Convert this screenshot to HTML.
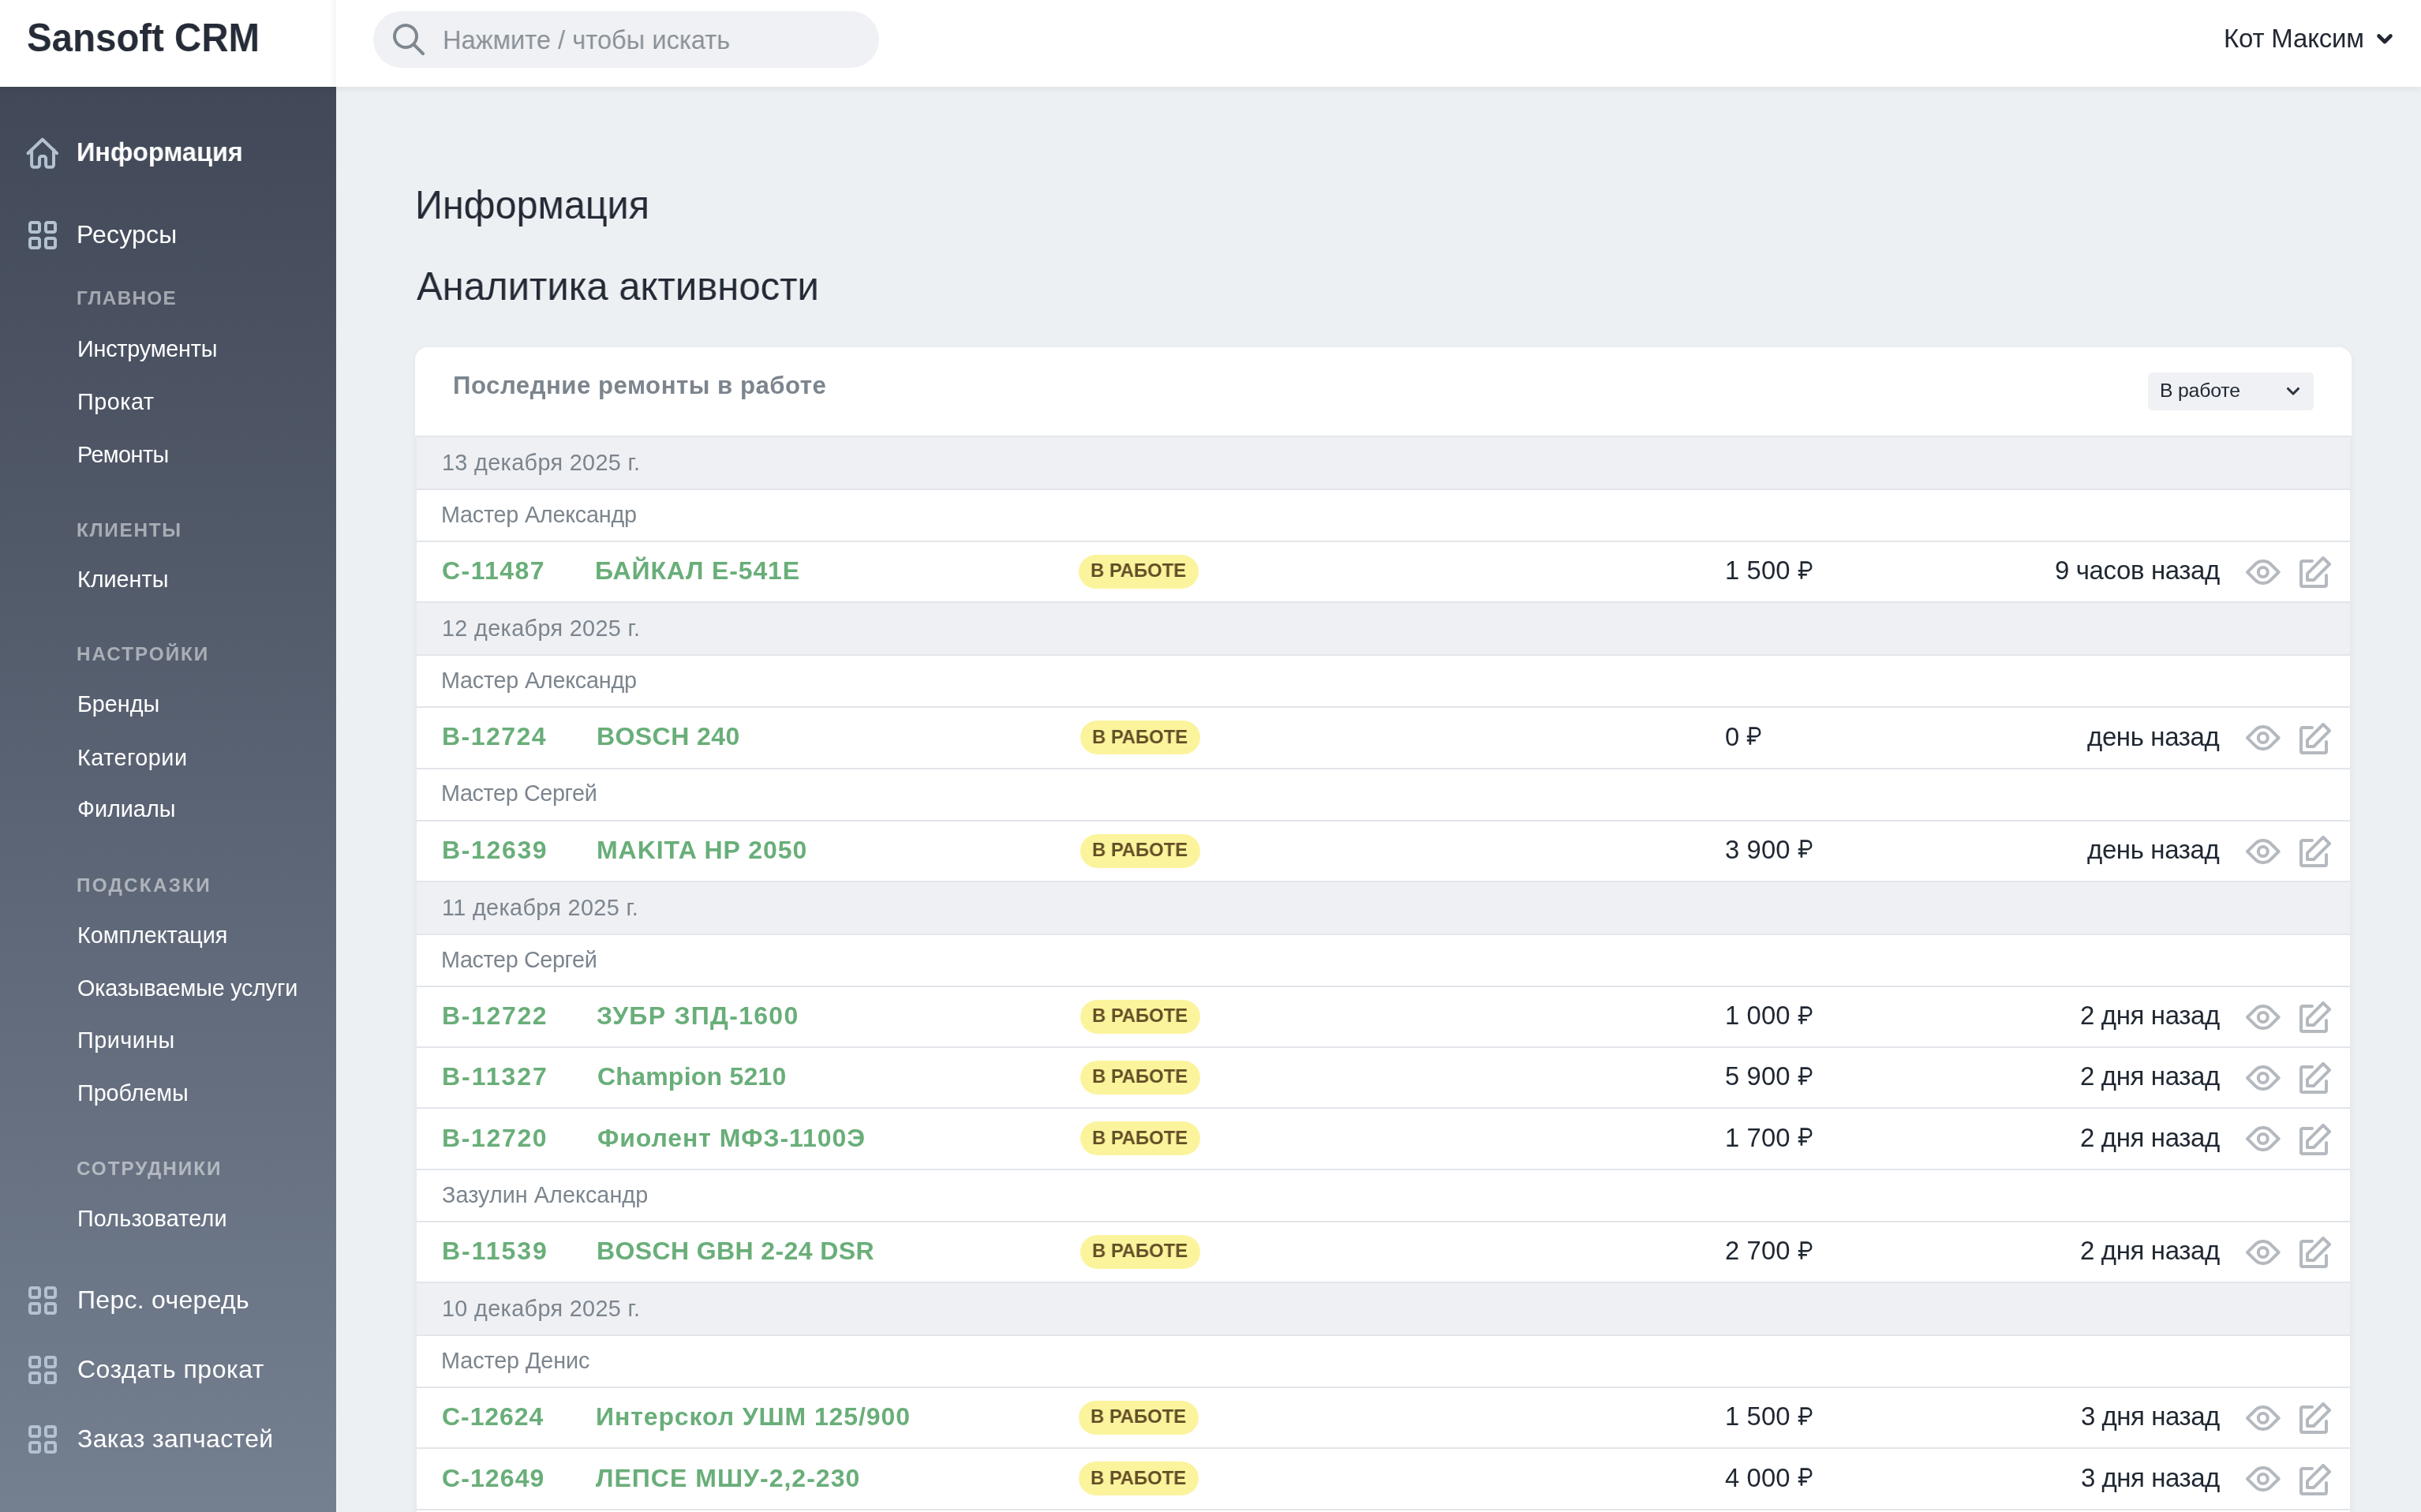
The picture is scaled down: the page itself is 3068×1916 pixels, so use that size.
<!DOCTYPE html>
<html lang="ru">
<head>
<meta charset="utf-8">
<title>Sansoft CRM</title>
<style>
html,body{margin:0;padding:0;}
body{width:3068px;height:1916px;overflow:hidden;position:relative;background:#edf0f3;font-family:"Liberation Sans",sans-serif;}
.t{position:absolute;white-space:nowrap;line-height:1;z-index:6;will-change:transform;}
#hdr{position:absolute;left:0;top:0;width:3068px;height:110px;background:#fff;box-shadow:0 4px 8px rgba(0,0,0,.05);z-index:5;}
#side{position:absolute;left:0;top:110px;width:426px;height:1806px;background:linear-gradient(180deg,#414857 0%,#747f90 100%);z-index:4;}
#card{position:absolute;left:526px;top:440px;width:2454px;height:1600px;background:#fff;border-radius:16px 16px 0 0;box-shadow:0 2px 8px rgba(0,0,0,.05);}
.row{position:absolute;left:528px;width:2450px;background:#fff;}
.row.d{background:#eff0f4;}
.ln{position:absolute;left:528px;width:2450px;height:2px;background:#e2e5ea;}
.vb{position:absolute;top:552px;width:2px;height:1364px;background:#e6e9ee;}
.badge{position:absolute;height:43px;width:152px;border-radius:22px;background:#fcf49d;}
svg{z-index:6}
</style>
</head>
<body>
<div id="hdr"></div>
<div style="position:absolute;left:416px;top:0;width:10px;height:110px;background:linear-gradient(90deg,rgba(0,0,0,0),rgba(0,0,0,.035));z-index:5"></div>
<div id="side"></div>

<div class="t" style="left:34.3px;top:22.53px;font-size:50.4px;font-weight:bold;color:#252c37;letter-spacing:0px;transform:scaleX(0.941);transform-origin:0 0;">Sansoft CRM</div>
<div style="position:absolute;left:473px;top:14px;width:641px;height:72px;border-radius:36px;background:#eff1f4;z-index:6"></div>
<svg style="position:absolute;left:497.5px;top:30px;z-index:6" width="40" height="40" viewBox="0 0 20 20"><path fill="#7f878f" d="M14.32 12.906l5.387 5.387a1 1 0 0 1-1.414 1.414l-5.387-5.387a8 8 0 1 1 1.414-1.414zM8 14A6 6 0 1 0 8 2a6 6 0 0 0 0 12z"/></svg>
<div class="t" style="left:560.7px;top:33.01px;font-size:34px;font-weight:normal;color:#8a9097;letter-spacing:0px;transform:scaleX(0.9605);transform-origin:0 0;">Нажмите / чтобы искать</div>
<div class="t" style="left:2818.0px;top:32.06px;font-size:33px;font-weight:normal;color:#212833;letter-spacing:-0.2px;">Кот Максим</div>
<svg style="position:absolute;left:3009px;top:40px;z-index:6" width="26" height="20" viewBox="0 0 26 20" fill="none" stroke="#212833" stroke-width="4.6" stroke-linecap="round" stroke-linejoin="round"><path d="M5.5 5.5l7.5 7.5 7.5-7.5"/></svg>
<svg style="position:absolute;left:24px;top:164px;z-index:6" width="60" height="60" viewBox="0 0 60 60" fill="none" stroke="#b3c1d1" stroke-width="4" stroke-linecap="round" stroke-linejoin="round"><path d="M11.5 30.2L29.8 12.7 48.1 30.2"/><path d="M16.1 25.8V45.1a2.7 2.7 0 0 0 2.7 2.7H23.3a2.7 2.7 0 0 0 2.7-2.7V36.8a2.7 2.7 0 0 1 2.7-2.7H31.4a2.7 2.7 0 0 1 2.7 2.7V45.1a2.7 2.7 0 0 0 2.7 2.7H41.3a2.7 2.7 0 0 0 2.7-2.7V25.8"/></svg>
<div class="t" style="left:97.4px;top:175.94px;font-size:33.5px;font-weight:bold;color:#ffffff;letter-spacing:0px;transform:scaleX(0.97);transform-origin:0 0;">Информация</div>
<svg style="position:absolute;left:34px;top:278px" width="40" height="40" viewBox="0 0 20 20"><path fill="#b3c1d1" d="M3 1h4c1.1 0 2 .9 2 2v4c0 1.1-.9 2-2 2H3c-1.1 0-2-.9-2-2V3c0-1.1.9-2 2-2zm0 2v4h4V3H3zm10-2h4c1.1 0 2 .9 2 2v4c0 1.1-.9 2-2 2h-4c-1.1 0-2-.9-2-2V3c0-1.1.9-2 2-2zm0 2v4h4V3h-4zM3 11h4c1.1 0 2 .9 2 2v4c0 1.1-.9 2-2 2H3c-1.1 0-2-.9-2-2v-4c0-1.1.9-2 2-2zm0 2v4h4v-4H3zm10-2h4c1.1 0 2 .9 2 2v4c0 1.1-.9 2-2 2h-4c-1.1 0-2-.9-2-2v-4c0-1.1.9-2 2-2zm0 2v4h4v-4h-4z"/></svg>
<div class="t" style="left:97.0px;top:280.71px;font-size:32px;font-weight:normal;color:#ffffff;letter-spacing:0.17px;">Ресурсы</div>
<div class="t" style="left:97.2px;top:366.43px;font-size:24.3px;font-weight:bold;color:rgba(255,255,255,0.5);letter-spacing:1.3px;">ГЛАВНОЕ</div>
<div class="t" style="left:97.5px;top:427.62px;font-size:28.8px;font-weight:normal;color:#ffffff;letter-spacing:-0.22px;">Инструменты</div>
<div class="t" style="left:97.5px;top:494.82px;font-size:28.8px;font-weight:normal;color:#ffffff;letter-spacing:0.5px;">Прокат</div>
<div class="t" style="left:97.5px;top:561.82px;font-size:28.8px;font-weight:normal;color:#ffffff;letter-spacing:-0.55px;">Ремонты</div>
<div class="t" style="left:97.2px;top:659.73px;font-size:24.3px;font-weight:bold;color:rgba(255,255,255,0.5);letter-spacing:1.72px;">КЛИЕНТЫ</div>
<div class="t" style="left:97.5px;top:719.82px;font-size:28.8px;font-weight:normal;color:#ffffff;letter-spacing:-0.02px;">Клиенты</div>
<div class="t" style="left:97.2px;top:817.23px;font-size:24.3px;font-weight:bold;color:rgba(255,255,255,0.5);letter-spacing:1.94px;">НАСТРОЙКИ</div>
<div class="t" style="left:97.5px;top:878.12px;font-size:28.8px;font-weight:normal;color:#ffffff;letter-spacing:-0.04px;">Бренды</div>
<div class="t" style="left:97.5px;top:945.62px;font-size:28.8px;font-weight:normal;color:#ffffff;letter-spacing:0.49px;">Категории</div>
<div class="t" style="left:97.5px;top:1011.42px;font-size:28.8px;font-weight:normal;color:#ffffff;letter-spacing:0.0px;">Филиалы</div>
<div class="t" style="left:97.2px;top:1110.43px;font-size:24.3px;font-weight:bold;color:rgba(255,255,255,0.5);letter-spacing:2.23px;">ПОДСКАЗКИ</div>
<div class="t" style="left:97.5px;top:1170.82px;font-size:28.8px;font-weight:normal;color:#ffffff;letter-spacing:-0.05px;">Комплектация</div>
<div class="t" style="left:97.5px;top:1237.52px;font-size:28.8px;font-weight:normal;color:#ffffff;letter-spacing:-0.21px;">Оказываемые услуги</div>
<div class="t" style="left:97.5px;top:1304.42px;font-size:28.8px;font-weight:normal;color:#ffffff;letter-spacing:0.47px;">Причины</div>
<div class="t" style="left:97.5px;top:1371.32px;font-size:28.8px;font-weight:normal;color:#ffffff;letter-spacing:-0.07px;">Проблемы</div>
<div class="t" style="left:97.2px;top:1468.83px;font-size:24.3px;font-weight:bold;color:rgba(255,255,255,0.5);letter-spacing:1.93px;">СОТРУДНИКИ</div>
<div class="t" style="left:97.5px;top:1530.42px;font-size:28.8px;font-weight:normal;color:#ffffff;letter-spacing:0.14px;">Пользователи</div>
<svg style="position:absolute;left:34px;top:1628px" width="40" height="40" viewBox="0 0 20 20"><path fill="#b3c1d1" d="M3 1h4c1.1 0 2 .9 2 2v4c0 1.1-.9 2-2 2H3c-1.1 0-2-.9-2-2V3c0-1.1.9-2 2-2zm0 2v4h4V3H3zm10-2h4c1.1 0 2 .9 2 2v4c0 1.1-.9 2-2 2h-4c-1.1 0-2-.9-2-2V3c0-1.1.9-2 2-2zm0 2v4h4V3h-4zM3 11h4c1.1 0 2 .9 2 2v4c0 1.1-.9 2-2 2H3c-1.1 0-2-.9-2-2v-4c0-1.1.9-2 2-2zm0 2v4h4v-4H3zm10-2h4c1.1 0 2 .9 2 2v4c0 1.1-.9 2-2 2h-4c-1.1 0-2-.9-2-2v-4c0-1.1.9-2 2-2zm0 2v4h4v-4h-4z"/></svg>
<div class="t" style="left:97.5px;top:1631.21px;font-size:32px;font-weight:normal;color:#ffffff;letter-spacing:0.29px;">Перс. очередь</div>
<svg style="position:absolute;left:34px;top:1716px" width="40" height="40" viewBox="0 0 20 20"><path fill="#b3c1d1" d="M3 1h4c1.1 0 2 .9 2 2v4c0 1.1-.9 2-2 2H3c-1.1 0-2-.9-2-2V3c0-1.1.9-2 2-2zm0 2v4h4V3H3zm10-2h4c1.1 0 2 .9 2 2v4c0 1.1-.9 2-2 2h-4c-1.1 0-2-.9-2-2V3c0-1.1.9-2 2-2zm0 2v4h4V3h-4zM3 11h4c1.1 0 2 .9 2 2v4c0 1.1-.9 2-2 2H3c-1.1 0-2-.9-2-2v-4c0-1.1.9-2 2-2zm0 2v4h4v-4H3zm10-2h4c1.1 0 2 .9 2 2v4c0 1.1-.9 2-2 2h-4c-1.1 0-2-.9-2-2v-4c0-1.1.9-2 2-2zm0 2v4h4v-4h-4z"/></svg>
<div class="t" style="left:97.5px;top:1718.61px;font-size:32px;font-weight:normal;color:#ffffff;letter-spacing:0.5px;">Создать прокат</div>
<svg style="position:absolute;left:34px;top:1804px" width="40" height="40" viewBox="0 0 20 20"><path fill="#b3c1d1" d="M3 1h4c1.1 0 2 .9 2 2v4c0 1.1-.9 2-2 2H3c-1.1 0-2-.9-2-2V3c0-1.1.9-2 2-2zm0 2v4h4V3H3zm10-2h4c1.1 0 2 .9 2 2v4c0 1.1-.9 2-2 2h-4c-1.1 0-2-.9-2-2V3c0-1.1.9-2 2-2zm0 2v4h4V3h-4zM3 11h4c1.1 0 2 .9 2 2v4c0 1.1-.9 2-2 2H3c-1.1 0-2-.9-2-2v-4c0-1.1.9-2 2-2zm0 2v4h4v-4H3zm10-2h4c1.1 0 2 .9 2 2v4c0 1.1-.9 2-2 2h-4c-1.1 0-2-.9-2-2v-4c0-1.1.9-2 2-2zm0 2v4h4v-4h-4z"/></svg>
<div class="t" style="left:97.5px;top:1806.61px;font-size:32px;font-weight:normal;color:#ffffff;letter-spacing:0.37px;">Заказ запчастей</div>
<div class="t" style="left:526.1px;top:234.86px;font-size:50px;font-weight:normal;color:#232a35;letter-spacing:0px;transform:scaleX(0.97);transform-origin:0 0;">Информация</div>
<div class="t" style="left:528.0px;top:337.87px;font-size:50px;font-weight:normal;color:#232a35;letter-spacing:0px;transform:scaleX(0.98);transform-origin:0 0;">Аналитика активности</div>
<div id="card"></div>
<div class="vb" style="left:526px"></div><div class="vb" style="left:2978px"></div>
<div class="t" style="left:574.1px;top:473.28px;font-size:31.2px;font-weight:bold;color:#7c858e;letter-spacing:0.5px;">Последние ремонты в работе</div>
<div style="position:absolute;left:2722px;top:472px;width:210px;height:48px;border-radius:5px;background:#eff1f4;z-index:6"></div>
<div class="t" style="left:2737.2px;top:483.00px;font-size:24.8px;font-weight:normal;color:#212833;letter-spacing:-0.2px;">В работе</div>
<svg style="position:absolute;left:2894px;top:486px;z-index:6" width="24" height="20" viewBox="0 0 24 20" fill="none" stroke="#2f3640" stroke-width="3.1" stroke-linecap="round" stroke-linejoin="round"><path d="M5.5 6.5l6.5 6.5 6.5-6.5"/></svg>
<div class="ln" style="top:552px"></div>
<div class="row d" style="top:554px;height:65px"></div>
<div class="t" style="left:560.0px;top:571.62px;font-size:28.8px;font-weight:normal;color:#7c858e;letter-spacing:0.35px;">13 декабря 2025 г.</div>
<div class="ln" style="top:619px"></div>
<div class="row" style="top:621px;height:64px"></div>
<div class="t" style="left:559.2px;top:637.82px;font-size:28.8px;font-weight:normal;color:#7c858e;letter-spacing:-0.247px;">Мастер Александр</div>
<div class="ln" style="top:685px"></div>
<div class="row" style="top:687px;height:75px"></div>
<div class="t" style="left:560.4px;top:707.11px;font-size:32px;font-weight:bold;color:#69ae79;letter-spacing:1.433px;">С-11487</div>
<div class="t" style="left:754.3px;top:707.11px;font-size:32px;font-weight:bold;color:#69ae79;letter-spacing:0.833px;">БАЙКАЛ Е-541Е</div>
<div class="badge" style="left:1367.0px;top:702.9px;z-index:6"></div>
<div class="t" style="left:1382.1px;top:711.29px;font-size:24.7px;font-weight:bold;color:#634e26;letter-spacing:0px;transform:scaleX(0.967);transform-origin:0 0;">В РАБОТЕ</div>
<div class="t" style="left:2185.7px;top:707.23px;font-size:32.8px;font-weight:normal;color:#1f2732;letter-spacing:0.1px;">1 500</div>
<svg style="position:absolute;left:2277.8px;top:709.7px;z-index:6" width="20" height="25" viewBox="0 0 20 25" fill="none" stroke="#1f2732" stroke-width="2.6"><path d="M4.9 23.8V2.6H11.9A5.3 5.3 0 0 1 11.9 13.2H0.8M0.8 18.2H11.9"/></svg>
<div class="t" style="left:2603.6px;top:706.26px;font-size:33px;font-weight:normal;color:#1f2732;letter-spacing:-0.383px;">9 часов назад</div>
<svg style="position:absolute;left:2846px;top:709px" width="44" height="32" viewBox="0 0 22 16"><path fill="#b4b9bf" d="M16.56 13.66a8 8 0 0 1-11.32 0L.3 8.7a1 1 0 0 1 0-1.42l4.95-4.95a8 8 0 0 1 11.32 0l4.95 4.95a1 1 0 0 1 0 1.42l-4.95 4.95-.01.01zm-9.9-1.42a6 6 0 0 0 8.48 0L19.38 8l-4.24-4.24a6 6 0 0 0-8.48 0L2.4 8l4.24 4.24h.02zM10.9 12a4 4 0 1 1 0-8 4 4 0 0 1 0 8zm0-2a2 2 0 1 0 0-4 2 2 0 0 0 0 4z"/></svg>
<svg style="position:absolute;left:2914px;top:705px" width="40" height="40" viewBox="0 0 20 20"><path fill="#b4b9bf" d="M4.3 10.3l10-10a1 1 0 0 1 1.4 0l4 4a1 1 0 0 1 0 1.4l-10 10a1 1 0 0 1-.7.3H5a1 1 0 0 1-1-1v-4a1 1 0 0 1 .3-.7zM6 14h2.59l9-9L15 2.41l-9 9V14zm10-2a1 1 0 0 1 2 0v6a2 2 0 0 1-2 2H2a2 2 0 0 1-2-2V4c0-1.1.9-2 2-2h6a1 1 0 1 1 0 2H2v14h14v-6z"/></svg>
<div class="ln" style="top:762px"></div>
<div class="row d" style="top:764px;height:65px"></div>
<div class="t" style="left:560.0px;top:781.92px;font-size:28.8px;font-weight:normal;color:#7c858e;letter-spacing:0.35px;">12 декабря 2025 г.</div>
<div class="ln" style="top:829px"></div>
<div class="row" style="top:831px;height:64px"></div>
<div class="t" style="left:559.2px;top:848.12px;font-size:28.8px;font-weight:normal;color:#7c858e;letter-spacing:-0.247px;">Мастер Александр</div>
<div class="ln" style="top:895px"></div>
<div class="row" style="top:897px;height:76px"></div>
<div class="t" style="left:559.9px;top:917.41px;font-size:32px;font-weight:bold;color:#69ae79;letter-spacing:1.483px;">В-12724</div>
<div class="t" style="left:756.2px;top:917.41px;font-size:32px;font-weight:bold;color:#69ae79;letter-spacing:0.425px;">BOSCH 240</div>
<div class="badge" style="left:1368.9px;top:913.2px;z-index:6"></div>
<div class="t" style="left:1384.0px;top:921.59px;font-size:24.7px;font-weight:bold;color:#634e26;letter-spacing:0px;transform:scaleX(0.967);transform-origin:0 0;">В РАБОТЕ</div>
<div class="t" style="left:2185.7px;top:917.53px;font-size:32.8px;font-weight:normal;color:#1f2732;letter-spacing:0.1px;">0</div>
<svg style="position:absolute;left:2212.9px;top:920.0px;z-index:6" width="20" height="25" viewBox="0 0 20 25" fill="none" stroke="#1f2732" stroke-width="2.6"><path d="M4.9 23.8V2.6H11.9A5.3 5.3 0 0 1 11.9 13.2H0.8M0.8 18.2H11.9"/></svg>
<div class="t" style="left:2645.4px;top:916.56px;font-size:33px;font-weight:normal;color:#1f2732;letter-spacing:-0.378px;">день назад</div>
<svg style="position:absolute;left:2846px;top:919px" width="44" height="32" viewBox="0 0 22 16"><path fill="#b4b9bf" d="M16.56 13.66a8 8 0 0 1-11.32 0L.3 8.7a1 1 0 0 1 0-1.42l4.95-4.95a8 8 0 0 1 11.32 0l4.95 4.95a1 1 0 0 1 0 1.42l-4.95 4.95-.01.01zm-9.9-1.42a6 6 0 0 0 8.48 0L19.38 8l-4.24-4.24a6 6 0 0 0-8.48 0L2.4 8l4.24 4.24h.02zM10.9 12a4 4 0 1 1 0-8 4 4 0 0 1 0 8zm0-2a2 2 0 1 0 0-4 2 2 0 0 0 0 4z"/></svg>
<svg style="position:absolute;left:2914px;top:916px" width="40" height="40" viewBox="0 0 20 20"><path fill="#b4b9bf" d="M4.3 10.3l10-10a1 1 0 0 1 1.4 0l4 4a1 1 0 0 1 0 1.4l-10 10a1 1 0 0 1-.7.3H5a1 1 0 0 1-1-1v-4a1 1 0 0 1 .3-.7zM6 14h2.59l9-9L15 2.41l-9 9V14zm10-2a1 1 0 0 1 2 0v6a2 2 0 0 1-2 2H2a2 2 0 0 1-2-2V4c0-1.1.9-2 2-2h6a1 1 0 1 1 0 2H2v14h14v-6z"/></svg>
<div class="ln" style="top:973px"></div>
<div class="row" style="top:975px;height:64px"></div>
<div class="t" style="left:559.2px;top:991.42px;font-size:28.8px;font-weight:normal;color:#7c858e;letter-spacing:-0.392px;">Мастер Сергей</div>
<div class="ln" style="top:1039px"></div>
<div class="row" style="top:1041px;height:75px"></div>
<div class="t" style="left:559.9px;top:1060.71px;font-size:32px;font-weight:bold;color:#69ae79;letter-spacing:1.65px;">В-12639</div>
<div class="t" style="left:756.2px;top:1060.71px;font-size:32px;font-weight:bold;color:#69ae79;letter-spacing:0.962px;">MAKITA HP 2050</div>
<div class="badge" style="left:1368.9px;top:1056.5px;z-index:6"></div>
<div class="t" style="left:1384.0px;top:1064.89px;font-size:24.7px;font-weight:bold;color:#634e26;letter-spacing:0px;transform:scaleX(0.967);transform-origin:0 0;">В РАБОТЕ</div>
<div class="t" style="left:2185.7px;top:1060.83px;font-size:32.8px;font-weight:normal;color:#1f2732;letter-spacing:0.1px;">3 900</div>
<svg style="position:absolute;left:2277.8px;top:1063.3px;z-index:6" width="20" height="25" viewBox="0 0 20 25" fill="none" stroke="#1f2732" stroke-width="2.6"><path d="M4.9 23.8V2.6H11.9A5.3 5.3 0 0 1 11.9 13.2H0.8M0.8 18.2H11.9"/></svg>
<div class="t" style="left:2645.4px;top:1059.86px;font-size:33px;font-weight:normal;color:#1f2732;letter-spacing:-0.378px;">день назад</div>
<svg style="position:absolute;left:2846px;top:1063px" width="44" height="32" viewBox="0 0 22 16"><path fill="#b4b9bf" d="M16.56 13.66a8 8 0 0 1-11.32 0L.3 8.7a1 1 0 0 1 0-1.42l4.95-4.95a8 8 0 0 1 11.32 0l4.95 4.95a1 1 0 0 1 0 1.42l-4.95 4.95-.01.01zm-9.9-1.42a6 6 0 0 0 8.48 0L19.38 8l-4.24-4.24a6 6 0 0 0-8.48 0L2.4 8l4.24 4.24h.02zM10.9 12a4 4 0 1 1 0-8 4 4 0 0 1 0 8zm0-2a2 2 0 1 0 0-4 2 2 0 0 0 0 4z"/></svg>
<svg style="position:absolute;left:2914px;top:1059px" width="40" height="40" viewBox="0 0 20 20"><path fill="#b4b9bf" d="M4.3 10.3l10-10a1 1 0 0 1 1.4 0l4 4a1 1 0 0 1 0 1.4l-10 10a1 1 0 0 1-.7.3H5a1 1 0 0 1-1-1v-4a1 1 0 0 1 .3-.7zM6 14h2.59l9-9L15 2.41l-9 9V14zm10-2a1 1 0 0 1 2 0v6a2 2 0 0 1-2 2H2a2 2 0 0 1-2-2V4c0-1.1.9-2 2-2h6a1 1 0 1 1 0 2H2v14h14v-6z"/></svg>
<div class="ln" style="top:1116px"></div>
<div class="row d" style="top:1118px;height:65px"></div>
<div class="t" style="left:560.0px;top:1135.52px;font-size:28.8px;font-weight:normal;color:#7c858e;letter-spacing:0.35px;">11 декабря 2025 г.</div>
<div class="ln" style="top:1183px"></div>
<div class="row" style="top:1185px;height:64px"></div>
<div class="t" style="left:559.2px;top:1201.72px;font-size:28.8px;font-weight:normal;color:#7c858e;letter-spacing:-0.392px;">Мастер Сергей</div>
<div class="ln" style="top:1249px"></div>
<div class="row" style="top:1251px;height:75px"></div>
<div class="t" style="left:559.9px;top:1271.01px;font-size:32px;font-weight:bold;color:#69ae79;letter-spacing:1.65px;">В-12722</div>
<div class="t" style="left:756.3px;top:1271.01px;font-size:32px;font-weight:bold;color:#69ae79;letter-spacing:1.3px;">ЗУБР ЗПД-1600</div>
<div class="badge" style="left:1368.9px;top:1266.8px;z-index:6"></div>
<div class="t" style="left:1384.0px;top:1275.19px;font-size:24.7px;font-weight:bold;color:#634e26;letter-spacing:0px;transform:scaleX(0.967);transform-origin:0 0;">В РАБОТЕ</div>
<div class="t" style="left:2185.7px;top:1271.13px;font-size:32.8px;font-weight:normal;color:#1f2732;letter-spacing:0.1px;">1 000</div>
<svg style="position:absolute;left:2277.8px;top:1273.6px;z-index:6" width="20" height="25" viewBox="0 0 20 25" fill="none" stroke="#1f2732" stroke-width="2.6"><path d="M4.9 23.8V2.6H11.9A5.3 5.3 0 0 1 11.9 13.2H0.8M0.8 18.2H11.9"/></svg>
<div class="t" style="left:2635.7px;top:1270.16px;font-size:33px;font-weight:normal;color:#1f2732;letter-spacing:-0.37px;">2 дня назад</div>
<svg style="position:absolute;left:2846px;top:1273px" width="44" height="32" viewBox="0 0 22 16"><path fill="#b4b9bf" d="M16.56 13.66a8 8 0 0 1-11.32 0L.3 8.7a1 1 0 0 1 0-1.42l4.95-4.95a8 8 0 0 1 11.32 0l4.95 4.95a1 1 0 0 1 0 1.42l-4.95 4.95-.01.01zm-9.9-1.42a6 6 0 0 0 8.48 0L19.38 8l-4.24-4.24a6 6 0 0 0-8.48 0L2.4 8l4.24 4.24h.02zM10.9 12a4 4 0 1 1 0-8 4 4 0 0 1 0 8zm0-2a2 2 0 1 0 0-4 2 2 0 0 0 0 4z"/></svg>
<svg style="position:absolute;left:2914px;top:1269px" width="40" height="40" viewBox="0 0 20 20"><path fill="#b4b9bf" d="M4.3 10.3l10-10a1 1 0 0 1 1.4 0l4 4a1 1 0 0 1 0 1.4l-10 10a1 1 0 0 1-.7.3H5a1 1 0 0 1-1-1v-4a1 1 0 0 1 .3-.7zM6 14h2.59l9-9L15 2.41l-9 9V14zm10-2a1 1 0 0 1 2 0v6a2 2 0 0 1-2 2H2a2 2 0 0 1-2-2V4c0-1.1.9-2 2-2h6a1 1 0 1 1 0 2H2v14h14v-6z"/></svg>
<div class="ln" style="top:1326px"></div>
<div class="row" style="top:1328px;height:75px"></div>
<div class="t" style="left:559.9px;top:1348.31px;font-size:32px;font-weight:bold;color:#69ae79;letter-spacing:1.983px;">В-11327</div>
<div class="t" style="left:756.6px;top:1348.31px;font-size:32px;font-weight:bold;color:#69ae79;letter-spacing:0.242px;">Champion 5210</div>
<div class="badge" style="left:1368.9px;top:1344.1px;z-index:6"></div>
<div class="t" style="left:1384.0px;top:1352.49px;font-size:24.7px;font-weight:bold;color:#634e26;letter-spacing:0px;transform:scaleX(0.967);transform-origin:0 0;">В РАБОТЕ</div>
<div class="t" style="left:2185.7px;top:1348.43px;font-size:32.8px;font-weight:normal;color:#1f2732;letter-spacing:0.1px;">5 900</div>
<svg style="position:absolute;left:2277.8px;top:1350.9px;z-index:6" width="20" height="25" viewBox="0 0 20 25" fill="none" stroke="#1f2732" stroke-width="2.6"><path d="M4.9 23.8V2.6H11.9A5.3 5.3 0 0 1 11.9 13.2H0.8M0.8 18.2H11.9"/></svg>
<div class="t" style="left:2635.7px;top:1347.46px;font-size:33px;font-weight:normal;color:#1f2732;letter-spacing:-0.37px;">2 дня назад</div>
<svg style="position:absolute;left:2846px;top:1350px" width="44" height="32" viewBox="0 0 22 16"><path fill="#b4b9bf" d="M16.56 13.66a8 8 0 0 1-11.32 0L.3 8.7a1 1 0 0 1 0-1.42l4.95-4.95a8 8 0 0 1 11.32 0l4.95 4.95a1 1 0 0 1 0 1.42l-4.95 4.95-.01.01zm-9.9-1.42a6 6 0 0 0 8.48 0L19.38 8l-4.24-4.24a6 6 0 0 0-8.48 0L2.4 8l4.24 4.24h.02zM10.9 12a4 4 0 1 1 0-8 4 4 0 0 1 0 8zm0-2a2 2 0 1 0 0-4 2 2 0 0 0 0 4z"/></svg>
<svg style="position:absolute;left:2914px;top:1346px" width="40" height="40" viewBox="0 0 20 20"><path fill="#b4b9bf" d="M4.3 10.3l10-10a1 1 0 0 1 1.4 0l4 4a1 1 0 0 1 0 1.4l-10 10a1 1 0 0 1-.7.3H5a1 1 0 0 1-1-1v-4a1 1 0 0 1 .3-.7zM6 14h2.59l9-9L15 2.41l-9 9V14zm10-2a1 1 0 0 1 2 0v6a2 2 0 0 1-2 2H2a2 2 0 0 1-2-2V4c0-1.1.9-2 2-2h6a1 1 0 1 1 0 2H2v14h14v-6z"/></svg>
<div class="ln" style="top:1403px"></div>
<div class="row" style="top:1405px;height:76px"></div>
<div class="t" style="left:559.9px;top:1425.61px;font-size:32px;font-weight:bold;color:#69ae79;letter-spacing:1.65px;">В-12720</div>
<div class="t" style="left:756.6px;top:1425.61px;font-size:32px;font-weight:bold;color:#69ae79;letter-spacing:0.925px;">Фиолент МФЗ-1100Э</div>
<div class="badge" style="left:1368.9px;top:1421.4px;z-index:6"></div>
<div class="t" style="left:1384.0px;top:1429.79px;font-size:24.7px;font-weight:bold;color:#634e26;letter-spacing:0px;transform:scaleX(0.967);transform-origin:0 0;">В РАБОТЕ</div>
<div class="t" style="left:2185.7px;top:1425.73px;font-size:32.8px;font-weight:normal;color:#1f2732;letter-spacing:0.1px;">1 700</div>
<svg style="position:absolute;left:2277.8px;top:1428.2px;z-index:6" width="20" height="25" viewBox="0 0 20 25" fill="none" stroke="#1f2732" stroke-width="2.6"><path d="M4.9 23.8V2.6H11.9A5.3 5.3 0 0 1 11.9 13.2H0.8M0.8 18.2H11.9"/></svg>
<div class="t" style="left:2635.7px;top:1424.76px;font-size:33px;font-weight:normal;color:#1f2732;letter-spacing:-0.37px;">2 дня назад</div>
<svg style="position:absolute;left:2846px;top:1427px" width="44" height="32" viewBox="0 0 22 16"><path fill="#b4b9bf" d="M16.56 13.66a8 8 0 0 1-11.32 0L.3 8.7a1 1 0 0 1 0-1.42l4.95-4.95a8 8 0 0 1 11.32 0l4.95 4.95a1 1 0 0 1 0 1.42l-4.95 4.95-.01.01zm-9.9-1.42a6 6 0 0 0 8.48 0L19.38 8l-4.24-4.24a6 6 0 0 0-8.48 0L2.4 8l4.24 4.24h.02zM10.9 12a4 4 0 1 1 0-8 4 4 0 0 1 0 8zm0-2a2 2 0 1 0 0-4 2 2 0 0 0 0 4z"/></svg>
<svg style="position:absolute;left:2914px;top:1424px" width="40" height="40" viewBox="0 0 20 20"><path fill="#b4b9bf" d="M4.3 10.3l10-10a1 1 0 0 1 1.4 0l4 4a1 1 0 0 1 0 1.4l-10 10a1 1 0 0 1-.7.3H5a1 1 0 0 1-1-1v-4a1 1 0 0 1 .3-.7zM6 14h2.59l9-9L15 2.41l-9 9V14zm10-2a1 1 0 0 1 2 0v6a2 2 0 0 1-2 2H2a2 2 0 0 1-2-2V4c0-1.1.9-2 2-2h6a1 1 0 1 1 0 2H2v14h14v-6z"/></svg>
<div class="ln" style="top:1481px"></div>
<div class="row" style="top:1483px;height:64px"></div>
<div class="t" style="left:560.2px;top:1499.62px;font-size:28.8px;font-weight:normal;color:#7c858e;letter-spacing:0.038px;">Зазулин Александр</div>
<div class="ln" style="top:1547px"></div>
<div class="row" style="top:1549px;height:75px"></div>
<div class="t" style="left:559.9px;top:1568.91px;font-size:32px;font-weight:bold;color:#69ae79;letter-spacing:1.983px;">В-11539</div>
<div class="t" style="left:756.2px;top:1568.91px;font-size:32px;font-weight:bold;color:#69ae79;letter-spacing:0.388px;">BOSCH GBH 2-24 DSR</div>
<div class="badge" style="left:1368.9px;top:1564.7px;z-index:6"></div>
<div class="t" style="left:1384.0px;top:1573.09px;font-size:24.7px;font-weight:bold;color:#634e26;letter-spacing:0px;transform:scaleX(0.967);transform-origin:0 0;">В РАБОТЕ</div>
<div class="t" style="left:2185.7px;top:1569.03px;font-size:32.8px;font-weight:normal;color:#1f2732;letter-spacing:0.1px;">2 700</div>
<svg style="position:absolute;left:2277.8px;top:1571.5px;z-index:6" width="20" height="25" viewBox="0 0 20 25" fill="none" stroke="#1f2732" stroke-width="2.6"><path d="M4.9 23.8V2.6H11.9A5.3 5.3 0 0 1 11.9 13.2H0.8M0.8 18.2H11.9"/></svg>
<div class="t" style="left:2635.7px;top:1568.06px;font-size:33px;font-weight:normal;color:#1f2732;letter-spacing:-0.37px;">2 дня назад</div>
<svg style="position:absolute;left:2846px;top:1571px" width="44" height="32" viewBox="0 0 22 16"><path fill="#b4b9bf" d="M16.56 13.66a8 8 0 0 1-11.32 0L.3 8.7a1 1 0 0 1 0-1.42l4.95-4.95a8 8 0 0 1 11.32 0l4.95 4.95a1 1 0 0 1 0 1.42l-4.95 4.95-.01.01zm-9.9-1.42a6 6 0 0 0 8.48 0L19.38 8l-4.24-4.24a6 6 0 0 0-8.48 0L2.4 8l4.24 4.24h.02zM10.9 12a4 4 0 1 1 0-8 4 4 0 0 1 0 8zm0-2a2 2 0 1 0 0-4 2 2 0 0 0 0 4z"/></svg>
<svg style="position:absolute;left:2914px;top:1567px" width="40" height="40" viewBox="0 0 20 20"><path fill="#b4b9bf" d="M4.3 10.3l10-10a1 1 0 0 1 1.4 0l4 4a1 1 0 0 1 0 1.4l-10 10a1 1 0 0 1-.7.3H5a1 1 0 0 1-1-1v-4a1 1 0 0 1 .3-.7zM6 14h2.59l9-9L15 2.41l-9 9V14zm10-2a1 1 0 0 1 2 0v6a2 2 0 0 1-2 2H2a2 2 0 0 1-2-2V4c0-1.1.9-2 2-2h6a1 1 0 1 1 0 2H2v14h14v-6z"/></svg>
<div class="ln" style="top:1624px"></div>
<div class="row d" style="top:1626px;height:65px"></div>
<div class="t" style="left:560.0px;top:1643.72px;font-size:28.8px;font-weight:normal;color:#7c858e;letter-spacing:0.35px;">10 декабря 2025 г.</div>
<div class="ln" style="top:1691px"></div>
<div class="row" style="top:1693px;height:64px"></div>
<div class="t" style="left:559.2px;top:1709.92px;font-size:28.8px;font-weight:normal;color:#7c858e;letter-spacing:-0.1px;">Мастер Денис</div>
<div class="ln" style="top:1757px"></div>
<div class="row" style="top:1759px;height:75px"></div>
<div class="t" style="left:560.4px;top:1779.21px;font-size:32px;font-weight:bold;color:#69ae79;letter-spacing:0.933px;">С-12624</div>
<div class="t" style="left:754.7px;top:1779.21px;font-size:32px;font-weight:bold;color:#69ae79;letter-spacing:0.9px;">Интерскол УШМ 125/900</div>
<div class="badge" style="left:1367.0px;top:1775.0px;z-index:6"></div>
<div class="t" style="left:1382.1px;top:1783.39px;font-size:24.7px;font-weight:bold;color:#634e26;letter-spacing:0px;transform:scaleX(0.967);transform-origin:0 0;">В РАБОТЕ</div>
<div class="t" style="left:2185.7px;top:1779.33px;font-size:32.8px;font-weight:normal;color:#1f2732;letter-spacing:0.1px;">1 500</div>
<svg style="position:absolute;left:2277.8px;top:1781.8px;z-index:6" width="20" height="25" viewBox="0 0 20 25" fill="none" stroke="#1f2732" stroke-width="2.6"><path d="M4.9 23.8V2.6H11.9A5.3 5.3 0 0 1 11.9 13.2H0.8M0.8 18.2H11.9"/></svg>
<div class="t" style="left:2636.7px;top:1778.36px;font-size:33px;font-weight:normal;color:#1f2732;letter-spacing:-0.47px;">3 дня назад</div>
<svg style="position:absolute;left:2846px;top:1781px" width="44" height="32" viewBox="0 0 22 16"><path fill="#b4b9bf" d="M16.56 13.66a8 8 0 0 1-11.32 0L.3 8.7a1 1 0 0 1 0-1.42l4.95-4.95a8 8 0 0 1 11.32 0l4.95 4.95a1 1 0 0 1 0 1.42l-4.95 4.95-.01.01zm-9.9-1.42a6 6 0 0 0 8.48 0L19.38 8l-4.24-4.24a6 6 0 0 0-8.48 0L2.4 8l4.24 4.24h.02zM10.9 12a4 4 0 1 1 0-8 4 4 0 0 1 0 8zm0-2a2 2 0 1 0 0-4 2 2 0 0 0 0 4z"/></svg>
<svg style="position:absolute;left:2914px;top:1777px" width="40" height="40" viewBox="0 0 20 20"><path fill="#b4b9bf" d="M4.3 10.3l10-10a1 1 0 0 1 1.4 0l4 4a1 1 0 0 1 0 1.4l-10 10a1 1 0 0 1-.7.3H5a1 1 0 0 1-1-1v-4a1 1 0 0 1 .3-.7zM6 14h2.59l9-9L15 2.41l-9 9V14zm10-2a1 1 0 0 1 2 0v6a2 2 0 0 1-2 2H2a2 2 0 0 1-2-2V4c0-1.1.9-2 2-2h6a1 1 0 1 1 0 2H2v14h14v-6z"/></svg>
<div class="ln" style="top:1834px"></div>
<div class="row" style="top:1836px;height:76px"></div>
<div class="t" style="left:560.4px;top:1856.51px;font-size:32px;font-weight:bold;color:#69ae79;letter-spacing:1.1px;">С-12649</div>
<div class="t" style="left:755.4px;top:1856.51px;font-size:32px;font-weight:bold;color:#69ae79;letter-spacing:1.012px;">ЛЕПСЕ МШУ-2,2-230</div>
<div class="badge" style="left:1367.0px;top:1852.3px;z-index:6"></div>
<div class="t" style="left:1382.1px;top:1860.69px;font-size:24.7px;font-weight:bold;color:#634e26;letter-spacing:0px;transform:scaleX(0.967);transform-origin:0 0;">В РАБОТЕ</div>
<div class="t" style="left:2185.7px;top:1856.63px;font-size:32.8px;font-weight:normal;color:#1f2732;letter-spacing:0.1px;">4 000</div>
<svg style="position:absolute;left:2277.8px;top:1859.1px;z-index:6" width="20" height="25" viewBox="0 0 20 25" fill="none" stroke="#1f2732" stroke-width="2.6"><path d="M4.9 23.8V2.6H11.9A5.3 5.3 0 0 1 11.9 13.2H0.8M0.8 18.2H11.9"/></svg>
<div class="t" style="left:2636.7px;top:1855.66px;font-size:33px;font-weight:normal;color:#1f2732;letter-spacing:-0.47px;">3 дня назад</div>
<svg style="position:absolute;left:2846px;top:1858px" width="44" height="32" viewBox="0 0 22 16"><path fill="#b4b9bf" d="M16.56 13.66a8 8 0 0 1-11.32 0L.3 8.7a1 1 0 0 1 0-1.42l4.95-4.95a8 8 0 0 1 11.32 0l4.95 4.95a1 1 0 0 1 0 1.42l-4.95 4.95-.01.01zm-9.9-1.42a6 6 0 0 0 8.48 0L19.38 8l-4.24-4.24a6 6 0 0 0-8.48 0L2.4 8l4.24 4.24h.02zM10.9 12a4 4 0 1 1 0-8 4 4 0 0 1 0 8zm0-2a2 2 0 1 0 0-4 2 2 0 0 0 0 4z"/></svg>
<svg style="position:absolute;left:2914px;top:1855px" width="40" height="40" viewBox="0 0 20 20"><path fill="#b4b9bf" d="M4.3 10.3l10-10a1 1 0 0 1 1.4 0l4 4a1 1 0 0 1 0 1.4l-10 10a1 1 0 0 1-.7.3H5a1 1 0 0 1-1-1v-4a1 1 0 0 1 .3-.7zM6 14h2.59l9-9L15 2.41l-9 9V14zm10-2a1 1 0 0 1 2 0v6a2 2 0 0 1-2 2H2a2 2 0 0 1-2-2V4c0-1.1.9-2 2-2h6a1 1 0 1 1 0 2H2v14h14v-6z"/></svg>
<div class="ln" style="top:1912px"></div>
<div class="row" style="top:1914px;height:40px"></div>
</body>
</html>
